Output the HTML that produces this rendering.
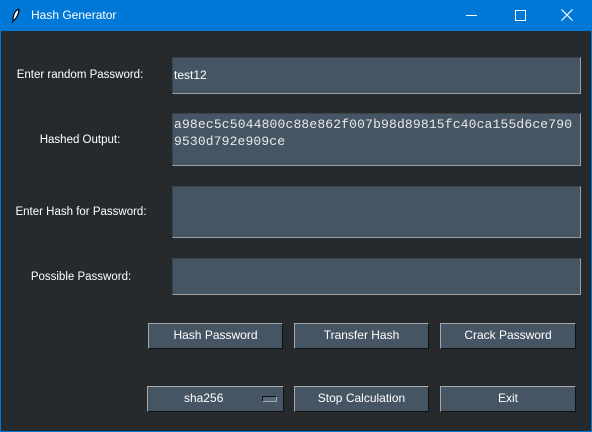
<!DOCTYPE html>
<html><head><style>
*{margin:0;padding:0;box-sizing:border-box}
body{width:592px;height:432px;background:#0078d7;font-family:"Liberation Sans",sans-serif;position:relative;overflow:hidden}
.win{position:absolute;left:1px;top:31px;width:590px;height:400px;background:#262a2d}
.t{position:absolute;color:#fff;font-size:12px;white-space:nowrap}
.lbl{position:absolute;color:#fff;font-size:11.5px;width:160px;text-align:center;transform:translateY(-50%)}
.e{position:absolute;background:#465564;border-top:1px solid #3a444d;border-left:1px solid #3a444d;border-right:1px solid #a0a0a0;border-bottom:1px solid #a0a0a0;color:#fff;font-size:12px}
.b{position:absolute;background:#465564;border:1px solid;border-color:#a8a8a8 #101010 #101010 #a8a8a8;color:#fff;font-size:12px;text-align:center;line-height:23px;height:26px}
</style></head><body>
<svg style="position:absolute;left:11px;top:8px" width="10" height="16" viewBox="0 0 10 16"><path d="M8 1 C3 3 2 9 2 13 L1 15 M2 13 C5 11 8 6 8 1" stroke="#000" fill="#fff" stroke-width="1.2"/></svg>
<div class="t" style="left:31px;top:8px">Hash Generator</div>
<div style="position:absolute;left:466px;top:15px;width:11px;height:1px;background:#fff"></div>
<div style="position:absolute;left:515px;top:10px;width:11px;height:11px;border:1px solid #fff"></div>
<svg style="position:absolute;left:561px;top:9px" width="12" height="12"><path d="M0.5 0.5L11.5 11.5M11.5 0.5L0.5 11.5" stroke="#fff" stroke-width="1.2"/></svg>
<div class="win"></div>
<div class="lbl" style="left:0;top:75px">Enter random Password:</div>
<div class="lbl" style="left:0;top:140px">Hashed Output:</div>
<div class="lbl" style="left:1px;top:212px">Enter Hash for Password:</div>
<div class="lbl" style="left:1px;top:277px">Possible Password:</div>
<div class="e" style="left:172px;top:57px;width:409px;height:37px;padding:10px 0 0 1px">test12</div>
<div class="e" style="left:172px;top:113px;width:409px;height:53px"></div>
<svg style="position:absolute;left:172px;top:113px" width="409" height="53" font-family="Liberation Mono, monospace" font-size="13" fill="#e8e8e8">
<text x="2" y="15" textLength="398" lengthAdjust="spacing">a98ec5c5044800c88e862f007b98d89815fc40ca155d6ce790</text>
<text x="2" y="32" textLength="111" lengthAdjust="spacing">9530d792e909ce</text>
</svg>
<div class="e" style="left:172px;top:186px;width:409px;height:52px"></div>
<div class="e" style="left:172px;top:258px;width:409px;height:37px"></div>
<div class="b" style="left:148px;top:323px;width:135px">Hash Password</div>
<div class="b" style="left:294px;top:323px;width:135px">Transfer Hash</div>
<div class="b" style="left:440px;top:323px;width:136px">Crack Password</div>
<div class="b" style="left:147px;top:386px;width:137px;text-align:left;padding-left:36px">sha256<span style="position:absolute;left:114px;top:9px;width:15px;height:6px;border:1px solid;border-color:#101010 #a8a8a8 #a8a8a8 #101010;background:#5a6874"></span></div>
<div class="b" style="left:294px;top:386px;width:135px">Stop Calculation</div>
<div class="b" style="left:440px;top:386px;width:136px">Exit</div>
</body></html>
